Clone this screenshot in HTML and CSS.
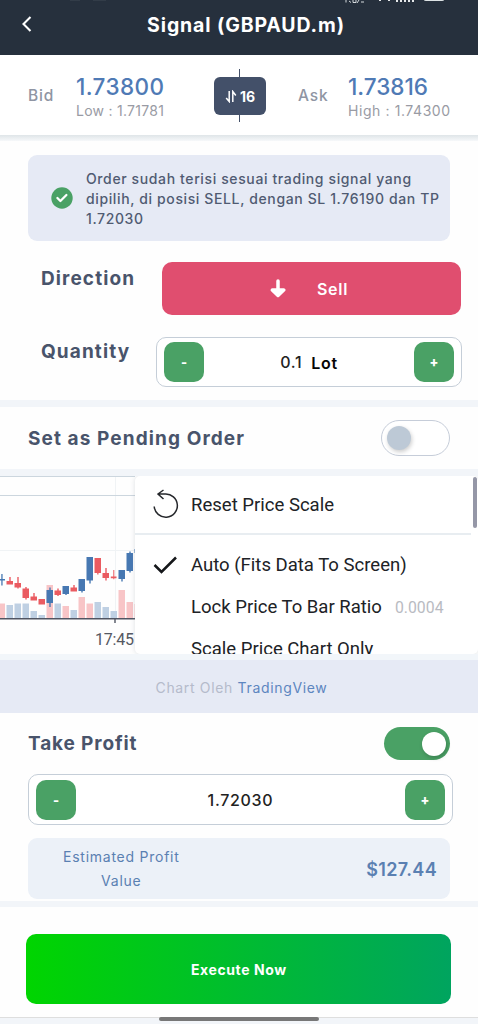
FILE: index.html
```html
<!DOCTYPE html>
<html lang="id">
<head>
<meta charset="utf-8">
<meta name="viewport" content="width=device-width, initial-scale=1">
<title>Signal (GBPAUD.m)</title>
<link rel="stylesheet" href="styles.css">
</head>
<body>
<main class="screen">
  <header class="header">
    <div class="status" aria-hidden="true">
      <svg width="478" height="4" viewBox="0 0 478 4"><path d="M70 0h10M93 0h13" stroke="#3f4955" stroke-width="1"/><path d="M346 0v2.5M349 1l2 1.5M353 0v2.5h3V0M359 0l-2 3M361 2h3" stroke="#d5dade" stroke-width="1" fill="none"/><path d="M380 0v1M389 0v1M397 0v2M401 0v2M405 0v2M409 0v2M413 0v2" stroke="#e6e9eb" stroke-width="2"/><path d="M424 0h20q0 1-2 1h-16q-2 0-2-1" fill="#dde3e5"/></svg>
    </div>
    <svg class="back" width="12" height="18" viewBox="0 0 12 18"><path d="M9.500 2L2.500 9l7 7" fill="none" stroke="#fff" stroke-width="2.1"/></svg>
    <h1 class="title">Signal (GBPAUD.m)</h1>
  </header>

  <section class="quotes">
    <span class="side side-bid">Bid</span>
    <div class="quote"><b class="price price-bid">1.73800</b><span class="range low">Low : 1.71781</span></div>
    <div class="spread">
      <svg width="12" height="13" viewBox="0 0 12 13"><path d="M4.2 1v10.5L1.2 8M7.8 12V1.5l3 4" fill="none" stroke="#fff" stroke-width="1.5"/></svg>
      <span>16</span>
    </div>
    <span class="side side-ask">Ask</span>
    <div class="quote quote-ask"><b class="price price-ask">1.73816</b><span class="range high">High : 1.74300</span></div>
  </section>

  <section class="order">
    <div class="notice">
      <svg width="22" height="22" viewBox="0 0 22 22"><circle cx="11" cy="11" r="10.7" fill="#4aa165"/><path d="M6.4 11l3 3 6-6" fill="none" stroke="#fff" stroke-width="2.3" stroke-linecap="round" stroke-linejoin="round"/></svg>
      <p>Order sudah terisi sesuai trading signal yang<br>dipilih, di posisi SELL, dengan SL 1.76190 dan TP<br>1.72030</p>
    </div>
    <div class="row direction">
      <h2 class="label">Direction</h2>
      <button class="sell"><svg width="16" height="19" viewBox="0 0 16 19"><path d="M8 2v14M2.3 11L8 16.4 13.700 11z" fill="#fff" stroke="#fff" stroke-width="3.500" stroke-linecap="round" stroke-linejoin="round"/></svg><span>Sell</span></button>
    </div>
    <div class="row quantity">
      <h2 class="label">Quantity</h2>
      <div class="stepper">
        <button class="step">-</button>
        <div class="value"><span class="amount">0.1</span><span class="unit">Lot</span></div>
        <button class="step">+</button>
      </div>
    </div>
  </section>

  <section class="pending">
    <h2 class="label">Set as Pending Order</h2>
    <div class="toggle"><i></i></div>
  </section>

  <section class="chart">
    <svg class="plot" width="135" height="178" viewBox="0 0 135 178">
      <path d="M115.500 0v143M0 74.500h136" stroke="#f0f3f5"/>
      <path d="M0 .5h136M0 19.500h136" stroke="#ccd6de"/>
      <g fill="#f8c5c7"><path d="M0 127.500h5V142H0zM46.500 109h6.500v33h-6.500zM62.500 130h6.500v12h-6.500zM78.500 121h6.500v21h-6.500zM86.500 127.500h6.500V142h-6.500zM118.500 114h6.500v28h-6.500zM126.500 126h6.500v16h-6.500zM134.500 128h1.500v14h-1.500z"/></g>
      <g fill="#bfd0e3"><path d="M6.500 129H13v13H6.500zM14.500 127.500H21V142h-6.500zM22.500 127.500H29V142h-6.500zM30.500 135H37v7h-6.500zM38.500 139H45v3h-6.500zM54.500 127.500H61V142h-6.500zM70.500 134H77v8h-6.500zM94.500 126h6.500v16h-6.500zM102.500 131h6.500v11h-6.500zM110.500 135h6.500v7h-6.500z"/></g>
      <g fill="#ea5b61"><path d="M9.300 101h1.400v4H13v3.500H6.500V105h2.800zM17.300 101h1.400v6H21v4.500h-2.300v1h-1.400v-1h-2.800V107h2.800zM25.300 111h1.400v1.500H29V122h-2.300v1.500h-1.400V122h-2.800v-9.500h2.800zM33.300 117h1.400v3.500H37v4h-6.500v-4h2.800zM38.500 123H45v5.500h-6.500zM57.300 112.500h1.400v2H61v4.500h-2.300v1h-1.400v-1h-2.800v-4.500h2.800zM73.300 109h1.400v2.500H77v4h-6.500v-4h2.800zM94.500 82h6.500v15h-2.500v1.500h-1.300V97h-2.700zM105.300 92h1.400v5h2.300v5h-2.300v2.500h-1.400V102h-2.800v-5h2.800zM113.300 94h1v6.500h2.200v1.800h-2.200v1h-1v-1h-2.500v-1.800h2.500z"/></g>
      <g fill="#4778b2"><path d="M1.300 98h1.300v5H5v1.600H2.600v5H1.300v-5H0V103h1.300zM49.300 111.500h1.400v2.500H53v13h-2.300v4h-1.400v-4h-2.800v-13h2.800zM62.500 110H69v8h-2.300v1h-1.400v-1h-2.800zM78.500 103H85v12h-2.300v1.500h-1.400V115h-2.800zM86.500 81H93v23.500h-2.300v3h-1.400v-3h-2.800zM118.500 94h6.500v9h-2.300v2.500h-1.400V103h-2.800zM129.300 75.500h1.400v1.500h2.300v18h-2.300v1.500h-1.400V95h-2.800V77h2.800zM134.500 73h1.500v4h-1.500z"/></g>
      <path d="M0 142.700h136M115 142v5" stroke="#505563" stroke-width="1.400"/>
      <text class="tick" x="95" y="168.500" textLength="39">17:45</text>
    </svg>
    <div class="menu">
      <div class="item reset"><svg width="28" height="32" viewBox="0 0 28 32"><path d="M2.200 17.500A11.600 11.600 0 1 0 13 5H6M11.500 1L6 5l5.500 5" fill="none" stroke="#26282c" stroke-width="1.500"/></svg><span>Reset Price Scale</span></div>
      <div class="item auto"><svg width="28" height="24" viewBox="0 0 28 24"><path d="M2.500 12l7 7L24 4.500" fill="none" stroke="#15171a" stroke-width="2.500"/></svg><span>Auto (Fits Data To Screen)</span></div>
      <div class="item"><span>Lock Price To Bar Ratio</span><span class="ratio">0.0004</span></div>
      <div class="item"><span>Scale Price Chart Only</span></div>
      <div class="scrollbar"></div>
    </div>
  </section>
  <div class="credit">Chart Oleh <a>TradingView</a></div>

  <section class="profit">
    <div class="profit-head"><h2 class="label">Take Profit</h2><div class="toggle on"><i></i></div></div>
    <div class="stepper">
      <button class="step">-</button>
      <div class="value tp">1.72030</div>
      <button class="step">+</button>
    </div>
    <div class="estimate">
      <p>Estimated Profit<br>Value</p>
      <b>$127.44</b>
    </div>
  </section>

  <section class="submit"><button class="execute">Execute Now</button></section>
  <footer class="navbar"><i></i></footer>
</main>
</body>
</html>
```
FILE: styles.css
```css
* { box-sizing: border-box; }
body { margin: 0; background: #fff; }
h1, h2, p { margin: 0; }
button { border: 0; padding: 0; font: inherit; }
svg { display: block; flex: none; }

.screen {
  width: 478px; height: 1024px; overflow: hidden;
  display: flex; flex-direction: column;
  font-family: Inter, "Open Sans", sans-serif;
  background: #fefefe; color: #49536a;
}
.screen > * { flex: none; }

.header { height: 55px; background: #26303d; position: relative; display: flex; align-items: center; justify-content: center; }
.status { position: absolute; top: 0; left: 0; }
.back { position: absolute; left: 21px; top: 15px; }
.title { color: #fff; font-size: 19.500px; font-weight: 700; line-height: 24px; letter-spacing: .87px; margin: 0 0 6px 14px; white-space: nowrap; }

.quotes { height: 86px; display: flex; background: linear-gradient(#fff 0 80px, #dfe5e8 80px, #f6f8fa 86px); }
.quotes > * { flex: none; }
.side { font-size: 15.500px; font-weight: 500; color: #8f95a3; letter-spacing: .8px; line-height: 20px; padding-top: 31px; }
.side-bid { width: 76px; padding-left: 28px; }
.side-ask { width: 82px; padding-left: 32px; }
.quote { width: 138px; padding-top: 18px; display: flex; flex-direction: column; white-space: nowrap; }
.quote-ask { width: 130px; }
.price { font-size: 22.500px; line-height: 27px; font-weight: 500; color: #4f7ab5; letter-spacing: .4px; }
.price-ask { letter-spacing: 0; }
.range { font-size: 14px; line-height: 21px; color: #999ba4; letter-spacing: .27px; }
.high { letter-spacing: .58px; }
.spread { width: 52px; height: 38px; margin-top: 22px; border-radius: 6px; background: #435069; color: #fff; font-size: 14px; font-weight: 700; display: flex; align-items: center; justify-content: center; gap: 3px; position: relative; }
.spread::before, .spread::after { content: ""; position: absolute; left: 25px; width: 1px; height: 8px; background: #435069; }
.spread::before { top: -8px; }
.spread::after { bottom: -7px; }

.order { height: 266px; padding-top: 14px; border-bottom: 7px solid #f2f5f9; }
.notice { width: 422px; height: 86px; margin-left: 28px; padding-left: 23px; border-radius: 9px; background: #e6eaf5; display: flex; align-items: center; gap: 13px; }
.notice p { font-size: 14px; line-height: 20px; font-weight: 500; white-space: nowrap; color: #505b72; letter-spacing: .62px; padding-top: 1px; }
.label { font-size: 19px; font-weight: 700; line-height: 24px; color: #49546b; white-space: nowrap; letter-spacing: 1.1px; padding-top: 2px; }
.row { display: flex; justify-content: space-between; }
.direction { margin-top: 21px; padding: 0 17px 0 41px; }
.direction .label { padding-top: 5px; }
.sell { width: 299px; height: 53px; border-radius: 10px; background: #e04e6f; color: #fff; display: flex; align-items: center; padding-left: 108px; font-size: 16px; font-weight: 600; letter-spacing: .7px; }
.sell span { margin-left: 31px; }
.quantity { margin-top: 22px; padding: 0 16px 0 41px; }
.quantity .label { padding-top: 3px; }
.stepper { width: 306px; height: 50px; border: 1px solid #c5ced8; border-radius: 10px; display: flex; align-items: center; justify-content: space-between; padding: 0 7px; background: #fff; }
.step { width: 40px; height: 40px; border-radius: 10px; background: #4aa165; color: #fff; font-size: 13px; font-weight: 800; }
.value { font-size: 16px; font-weight: 500; color: #222; display: flex; gap: 9px; letter-spacing: .7px; }
.unit { color: #050505; font-weight: 600; padding-top: 1px; }

.pending { height: 69px; display: flex; align-items: center; justify-content: space-between; padding: 0 28px; border-bottom: 7px solid #f2f5f9; }
.toggle { width: 69px; height: 36px; border: 1px solid #c6cdd9; border-radius: 18px; padding: 5px; background: #fff; }
.toggle i { display: block; width: 24px; height: 24px; border-radius: 50%; background: #bdc9d6; box-shadow: 1px 2px 4px #0003; }
.toggle.on { width: 66px; height: 33px; border: 0; background: #4aa165; padding: 5px 4px; display: flex; justify-content: flex-end; }
.toggle.on i { background: #fff; }

.chart { height: 184px; display: flex; border-bottom: 6px solid #f2f6fa; }
.plot { width: 135px; }
.tick { font: 16px Roboto, sans-serif; fill: #555862; }
.menu { flex: 1; height: 178px; overflow: hidden; position: relative; border-radius: 5px; background: #fff; box-shadow: 0 0 5px #7a869540; clip-path: inset(0 0 0 -6px); font: 18.550px/42px Roboto, sans-serif; color: #202226; }
.item { height: 42px; padding-left: 56px; display: flex; align-items: center; white-space: nowrap; }
.item svg { margin-left: -39px; margin-right: 11px; }
.reset { height: 59px; border-bottom: 2px solid #e8edf1; margin-right: 7px; }
.auto { height: 51px; padding-top: 9px; }
.ratio { font-size: 15.800px; color: #b9bbc2; margin-left: 13px; padding-top: 2px; }
.scrollbar { position: absolute; right: 1px; top: 1px; width: 4px; height: 51px; border-radius: 2px; background: #9597a7; }
.credit { height: 53px; background: #e6eaf5; font-size: 14px; line-height: 55px; text-align: center; color: #b5bbcb; padding-left: 5px; letter-spacing: .66px; }
.credit a { color: #5d86c0; }

.profit { height: 194px; padding: 13px 25px 0 28px; border-bottom: 6px solid #f2f5f9; }
.profit .label { letter-spacing: .87px; }
.profit-head { display: flex; justify-content: space-between; align-items: center; padding-right: 3px; height: 34px; }
.profit .stepper { width: 425px; height: 51px; margin-top: 14px; }
.estimate { width: 422px; height: 61px; margin-top: 13px; border-radius: 9px; background: #ecf1f8; color: #5a80b2; display: flex; align-items: center; justify-content: space-between; padding: 0 13px 0 35px; }
.estimate p { font-size: 14px; line-height: 24px; text-align: center; letter-spacing: .75px; }
.estimate b { font-size: 18px; font-weight: 600; letter-spacing: .35px; padding-top: 2px; }
.submit { height: 111px; padding: 27px 27px 0 26.400px; border-bottom: 1px solid #dedede; }
.execute { display: block; width: 425px; height: 70px; border-radius: 10px; background: linear-gradient(90deg, #00d500, #00a45f); color: #fff; font-size: 14px; font-weight: 700; letter-spacing: .6px; }
.navbar { height: 6px; background: #f2f5f9; display: flex; justify-content: center; align-items: flex-start; }
.navbar i { width: 160px; height: 4px; border-radius: 2px; background: #777; margin-top: -1px; }
```
